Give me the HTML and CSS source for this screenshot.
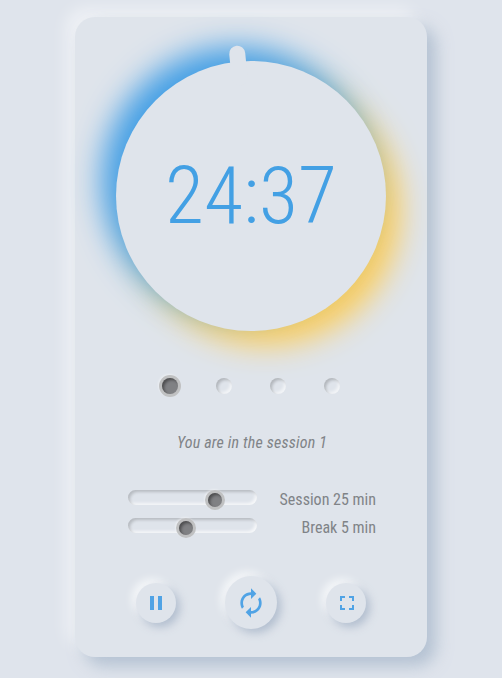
FILE: index.html
```
<!DOCTYPE html>
<html lang="en">
<head>
<meta charset="utf-8">
<title>Pomodoro timer</title>
<link rel="stylesheet" href="styles.css">
</head>
<body>
<main class="card">
  <section class="clock">
    <div class="hand"></div>
    <div class="time">24:37</div>
  </section>
  <div class="dots">
    <span class="dot active"></span><span class="dot"></span><span class="dot"></span><span class="dot"></span>
  </div>
  <p class="status">You are in the session 1</p>
  <section class="settings">
    <div class="row"><div class="track"><span class="thumb session"></span></div><span>Session 25 min</span></div>
    <div class="row"><div class="track"><span class="thumb break"></span></div><span>Break 5 min</span></div>
  </section>
  <section class="controls">
    <button class="btn" aria-label="Pause"><svg width="24" height="24" viewBox="0 0 24 24"><path d="M6 19h4V5H6v14zm8-14v14h4V5h-4z"/></svg></button>
    <button class="btn large" aria-label="Reset"><svg width="32" height="32" viewBox="0 0 24 24"><path d="M12 6v3l4-4-4-4v3c-4.42 0-8 3.58-8 8 0 1.57.46 3.03 1.24 4.26L6.7 14.8c-.45-.83-.7-1.79-.7-2.8 0-3.31 2.69-6 6-6zm6.76 1.74L17.3 9.2c.44.84.7 1.79.7 2.8 0 3.31-2.69 6-6 6v-3l-4 4 4 4v-3c4.42 0 8-3.58 8-8 0-1.57-.46-3.03-1.24-4.26z"/></svg></button>
    <button class="btn" aria-label="Fullscreen"><svg class="corners" width="24" height="24" viewBox="0 0 24 24"><path d="M7 14H5v5h5v-2H7v-3zm-2-4h2V7h3V5H5v5zm12 7h-3v2h5v-5h-2v3zM14 5v2h3v3h2V5h-5z"/></svg></button>
  </section>
</main>
</body>
</html>
```
FILE: styles.css
```
* { box-sizing: border-box; }
body {
  margin: 0;
  padding-top: 17px;
  height: 678px;
  overflow: hidden;
  background: #dfe4ec;
  color: #808387;
  font-family: "Roboto Condensed", Roboto, sans-serif;
  font-stretch: 75%;
  font-size: 16px;
}
.card {
  width: 352px;
  height: 640px;
  margin: 0 auto;
  padding-top: 44px;
  border-radius: 20px;
  background: #dfe4eb;
  box-shadow: 9px 9px 16px rgba(163, 180, 200, .7), -9px -9px 16px rgba(255, 255, 255, .5);
  display: flex;
  flex-direction: column;
  align-items: center;
}
.clock {
  position: relative;
  flex: none;
  width: 270px;
  height: 270px;
  border-radius: 50%;
  background: #dfe4eb;
  box-shadow: -15px -15px 30px -1px #439fe6, 15px 15px 30px -1px #fbcd5c;
  display: flex;
  align-items: center;
  justify-content: center;
}
.hand {
  position: absolute;
  left: 127px;
  top: -16px;
  width: 16px;
  height: 40px;
  border-radius: 8px;
  background: #dfe4eb;
  transform-origin: 8px 151px;
  transform: rotate(-5.52deg);
}
.time {
  font-size: 80px;
  font-weight: 300;
  line-height: 94px;
  color: #43a0e4;
}
.dots {
  display: flex;
  gap: 38px;
  margin-top: 47px;
}
.dot {
  width: 16px;
  height: 16px;
  border-radius: 50%;
  box-shadow: inset 2px 2px 3px rgba(0, 0, 0, .2), inset -2px -2px 3px rgba(255, 255, 255, .6);
}
.dot.active, .thumb {
  background: #808184;
  box-shadow: 0 0 0 3px #c0c1c2, inset 2px 2px 3px rgba(0, 0, 0, .4), -1px -1px 2px 3px rgba(255, 255, 255, .4);
}
.status {
  margin: 39px 0 0;
  padding-left: 2px;
  line-height: 20px;
  font-style: italic;
  letter-spacing: .18px;
}
.settings {
  width: 248px;
  margin: 36px 0 0 2px;
}
.row {
  height: 28px;
  line-height: 22px;
  display: flex;
  justify-content: space-between;
}
.track {
  position: relative;
  width: 129px;
  height: 15px;
  margin-top: 1px;
  border-radius: 8px;
  box-shadow: inset 2px 2px 3px rgba(0, 0, 0, .18), inset -2px -2px 3px rgba(255, 255, 255, .7);
}
.thumb {
  position: absolute;
  top: 3px;
  width: 14px;
  height: 14px;
  border-radius: 50%;
}
.session { left: 80px; }
.break { left: 51px; }
.controls {
  width: 230px;
  margin-top: 31px;
  display: flex;
  align-items: center;
  justify-content: space-between;
}
.btn {
  width: 40px;
  height: 40px;
  padding: 0;
  border: 0;
  border-radius: 50%;
  background: #dfe4eb;
  display: flex;
  align-items: center;
  justify-content: center;
  box-shadow: 4px 4px 8px rgba(163, 177, 198, .75), -4px -4px 8px rgba(255, 255, 255, .75);
}
.btn.large { width: 52px; height: 53px; }
.btn svg { fill: #50a3e5; }
.btn .corners { margin-left: 1px; }
```
